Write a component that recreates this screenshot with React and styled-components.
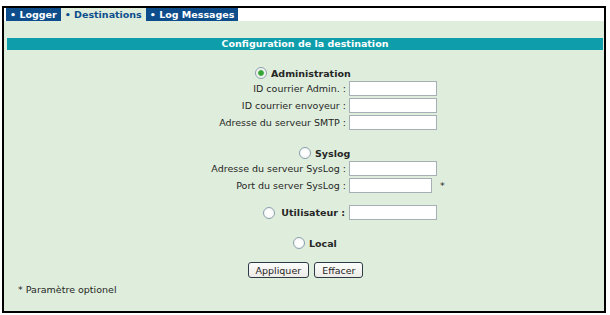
import styled, { createGlobalStyle } from "styled-components";

const Global = createGlobalStyle`
  html, body {
    margin: 0;
    padding: 0;
    background: #fff;
  }
  body {
    font-family: "DejaVu Sans", Verdana, sans-serif;
    font-size: 9.5px;
    color: #262626;
  }
`;

const Frame = styled.div`
  margin: 6px 0 0 2px;
  width: 604px;
  height: 307px;
  box-sizing: border-box;
  border: 2px solid #000;
  display: flex;
  flex-direction: column;
  background: #fff;
`;

const TabBar = styled.div`
  display: flex;
  height: 13px;
  padding: 0 2px;
  background: #fff;
`;

const Tab = styled.div`
  display: flex;
  align-items: center;
  padding: 0 4px 0 4px;
  font-weight: bold;
  font-size: 9.5px;
  white-space: nowrap;
  background: ${(p) => (p.$active ? "#dfeedc" : "#0d4d8c")};
  color: ${(p) => (p.$active ? "#0d4d8c" : "#fff")};
`;

const Content = styled.div`
  flex: 1;
  display: flex;
  flex-direction: column;
  background: #dfeedc;
`;

const TitleBar = styled.div`
  margin: 17px 1px 0 3px;
  height: 12px;
  line-height: 12px;
  background: #0d9dab;
  color: #fff;
  font-weight: bold;
  text-align: center;
`;

const Group = styled.div`
  display: grid;
  grid-template-columns: 342px 88px 1fr;
  column-gap: 3px;
  row-gap: 2px;
  margin-top: ${(p) => p.$top}px;
`;

const RadioRow = styled.div`
  grid-column: 1 / -1;
  display: flex;
  align-items: center;
  gap: 4px;
  height: 12px;
  padding-left: ${(p) => p.$indent}px;
  font-weight: bold;
`;

const Radio = styled.span`
  display: inline-block;
  width: 12px;
  height: 12px;
  box-sizing: border-box;
  border-radius: 50%;
  border: 1px solid #8c9fb0;
  background: ${(p) =>
    p.$checked
      ? "radial-gradient(circle, #36a436 0 2.4px, #8fd08f 2.8px, #eef2ee 3.6px, #fbfcfb 100%)"
      : "radial-gradient(circle, #fff 0 2px, #eef1ee 100%)"};
`;

const Label = styled.div`
  justify-self: end;
  align-self: center;
  white-space: nowrap;
`;

const InlineRadio = styled.div`
  justify-self: end;
  align-self: center;
  display: flex;
  align-items: center;
  gap: 6px;
  font-weight: bold;
  white-space: nowrap;
  margin-right: 1px;
`;

const Input = styled.input`
  width: ${(p) => p.$width || 88}px;
  height: 15px;
  box-sizing: border-box;
  margin: 0;
  padding: 0 2px;
  border: 1px solid #a6afb6;
  background: #fff;
  font: inherit;
  outline: none;
`;

const Star = styled.span`
  align-self: center;
`;

const ButtonRow = styled.div`
  display: flex;
  justify-content: center;
  gap: 5px;
  margin-top: 13px;
  padding-left: 3px;
`;

const Button = styled.button`
  height: 16px;
  box-sizing: border-box;
  padding: 0 7px;
  border: 1px solid #2f3a47;
  border-radius: 3px;
  background: linear-gradient(#fdfdfd, #ecebe6);
  font-family: inherit;
  font-size: 9.5px;
  color: #262626;
  line-height: 13px;
`;

const Note = styled.div`
  margin-top: 6px;
  padding-left: 14px;
`;

export default function App() {
  return (
    <>
      <Global />
      <Frame>
        <TabBar>
          <Tab>• Logger</Tab>
          <Tab $active>• Destinations</Tab>
          <Tab>• Log Messages</Tab>
        </TabBar>
        <Content>
          <TitleBar>Configuration de la destination</TitleBar>

          <Group $top={17}>
            <RadioRow $indent={251}>
              <Radio $checked />
              Administration
            </RadioRow>
            <Label>ID courrier Admin. :</Label>
            <Input />
            <span />
            <Label>ID courrier envoyeur :</Label>
            <Input />
            <span />
            <Label>Adresse du serveur SMTP :</Label>
            <Input />
            <span />
          </Group>

          <Group $top={17}>
            <RadioRow $indent={295}>
              <Radio />
              Syslog
            </RadioRow>
            <Label>Adresse du serveur SysLog :</Label>
            <Input />
            <span />
            <Label>Port du server SysLog :</Label>
            <Input $width={83} />
            <Star>*</Star>
          </Group>

          <Group $top={12}>
            <InlineRadio>
              <Radio />
              Utilisateur :
            </InlineRadio>
            <Input />
            <span />
          </Group>

          <Group $top={17}>
            <RadioRow $indent={289}>
              <Radio />
              Local
            </RadioRow>
          </Group>

          <ButtonRow>
            <Button>Appliquer</Button>
            <Button>Effacer</Button>
          </ButtonRow>

          <Note>* Paramètre optionel</Note>
        </Content>
      </Frame>
    </>
  );
}
